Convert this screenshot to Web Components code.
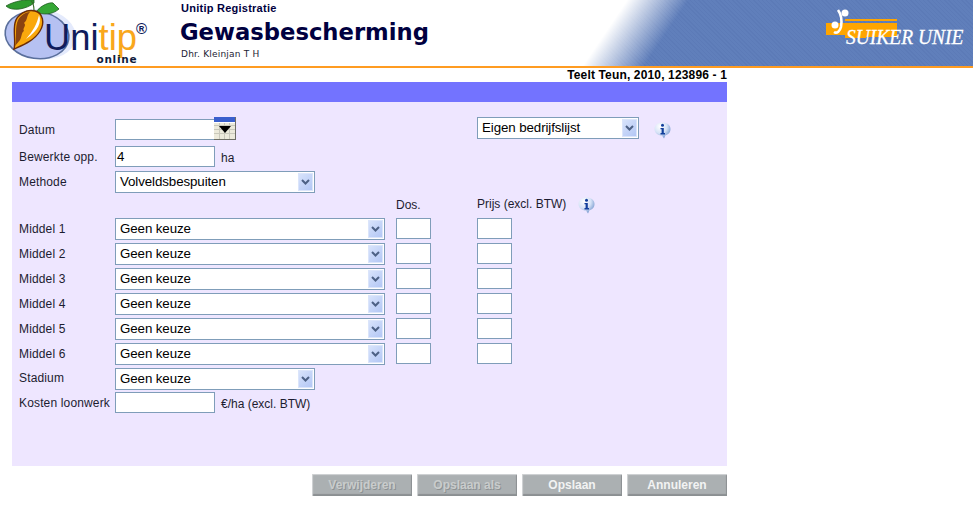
<!DOCTYPE html>
<html>
<head>
<meta charset="utf-8">
<title>Gewasbescherming</title>
<style>
  html, body { margin: 0; background: #fff; }
  body { font-family: "Liberation Sans", Arial, sans-serif; }
</style>
</head>
<body>
<tip-header></tip-header>
<tip-crumb>Teelt Teun, 2010, 123896 - 1</tip-crumb>
<tip-form></tip-form>
<tip-actions></tip-actions>

<script>
class TipHeader extends HTMLElement {
  constructor() {
    super();
    this.attachShadow({ mode: 'open' });
  }

  connectedCallback() {
    this.shadowRoot.innerHTML = `
      <style>
        :host {
          display: flex;
          height: 66px;
          border-bottom: 2px solid #ff9c21;
          color: #000040;
          background:
            linear-gradient(124deg, #fff 520px, rgba(255,255,255,0) 571px),
            repeating-linear-gradient(45deg, rgba(20,40,110,.05) 0 1px, transparent 1px 3px),
            #607fbb;
        }
        .logo { width: 181px; flex: none; }
        .logo svg { display: block; }
        .titles { flex: 1; display: flex; flex-direction: column; }
        .sub { font: bold 11px/12px "Liberation Sans", sans-serif; margin-top: 2px; letter-spacing: .25px; }
        h1 { margin: 5px 0 0 -1px; font: bold 22.7px/27px "DejaVu Sans", sans-serif; }
        .user { font: 9px/11px "DejaVu Sans", sans-serif; margin-top: 3px; color: #223; letter-spacing: .2px; }
        .partner { flex: none; width: 148px; }
      </style>
      <div class="logo">
        <svg width="160" height="66" viewBox="0 0 160 66">
          <ellipse cx="41" cy="34" rx="35" ry="25" transform="rotate(8 41 34)" fill="#e4eafc"/>
          <ellipse cx="37" cy="35" rx="32" ry="23.5" transform="rotate(8 37 35)" fill="#b6c1f2" stroke="#5a6f9c" stroke-width="1.600"/>
          <path d="M34 0 C27 -1 14 1 6 6 C12 12 27 9 34 3 Z" fill="#2e9b2e" stroke="#1f5a1f" stroke-width=".8"/>
          <path d="M36 12 C41 5 50 2 53 3 L59 9 C52 15 43 15 36 12 Z" fill="#35a735" stroke="#1f5a1f" stroke-width=".8"/>
          <path d="M31 1 C34 3 34 7 34 11" fill="none" stroke="#3a6a2a" stroke-width="1.200"/>
          <path d="M14 49 C16 42 13 32 15 23 C17 14 27 9 35 11 C43 13 45 23 40 31 C34 41 23 45 14 49 Z" fill="#f9a80d" stroke="#6b2c05" stroke-width="1.400"/>
          <path d="M15 46 C17 38 15 30 17 23 C19 16 25 12 30 12 C26 16 28 20 24 23 C27 26 22 28 24 31 C21 33 22 37 20 40 Z" fill="#8a4310"/>
          <path d="M39 15 C42 22 38 31 26 39 C33 31 37 24 39 15 Z" fill="#fff"/>
          <text x="44" y="50" font-family="Liberation Sans" font-size="36.500" textLength="93" lengthAdjust="spacingAndGlyphs"><tspan fill="#101c5c">Uni</tspan><tspan fill="#f9a71c">tip</tspan></text>
          <text x="136" y="34" font-family="Liberation Sans" font-weight="bold" font-size="15" fill="#101c5c">®</text>
          <text x="96.500" y="63" font-family="DejaVu Sans" font-weight="bold" font-size="10.500" fill="#101c3c" textLength="40">online</text>
        </svg>
      </div>
      <div class="titles">
        <div class="sub">Unitip Registratie</div>
        <h1>Gewasbescherming</h1>
        <div class="user">Dhr. Kleinjan T H</div>
      </div>
      <div class="partner">
        <svg width="148" height="66" viewBox="825 0 148 66">
          <path d="M845 19 H897 V21 H845 Z M826 23 H897 V37 H866 V38 H845 V35 H826 Z" fill="#ffa500"/>
          <path d="M838 10 C841 14 842 21 841 27 C840 31 837 34 834 32" fill="none" stroke="#fff" stroke-width="2.600"/>
          <circle cx="845" cy="13" r="3.500" fill="#fff"/>
          <circle cx="835" cy="25" r="3.500" fill="#fff"/>
          <text transform="translate(846 43.500) scale(1 1.100)" font-family="Liberation Serif" font-style="italic" font-size="19.500" fill="#fff" stroke="#fff" stroke-width=".25">SUIKER UNIE</text>
        </svg>
      </div>
    `;
  }
}

class TipCrumb extends HTMLElement {
  constructor() {
    super();
    this.attachShadow({ mode: 'open' });
    this.shadowRoot.innerHTML = `
      <style>
        :host {
          display: block;
          width: 727px;
          height: 14px;
          text-align: right;
          font: bold 12px/15px "Liberation Sans", sans-serif;
          letter-spacing: .15px;
          color: #000;
        }
      </style>
      <slot></slot>
    `;
  }
}

class TipField extends HTMLElement {
  constructor() {
    super();
    this.attachShadow({ mode: 'open' });
    this.shadowRoot.innerHTML = `
      <style>
        :host {
          display: block;
          box-sizing: border-box;
          width: var(--w, 100px);
          height: 21px;
          padding: 0 1px;
          background: #fff;
          border: 1px solid #7f9db9;
          font: 13.33px/19px "Liberation Sans", sans-serif;
          color: #000;
        }
      </style>
      <slot></slot>
    `;
  }
}

class TipSelect extends HTMLElement {
  constructor() {
    super();
    this.attachShadow({ mode: 'open' });
    this.shadowRoot.innerHTML = `
      <style>
        :host {
          display: flex;
          box-sizing: border-box;
          width: var(--w, 200px);
          height: 22px;
          padding: 1px;
          background: #fff;
          border: 1px solid #7f9db9;
          font: 13.33px/18px "Liberation Sans", sans-serif;
          letter-spacing: -.1px;
          color: #000;
        }
        .value { flex: 1; padding-left: 3px; white-space: nowrap; }
        .arrow {
          flex: none;
          width: 15px;
          display: flex;
          align-items: center;
          justify-content: center;
          background: linear-gradient(135deg, #d8e3fb, #b3c7f5);
          border: 1px solid #dbe5fb;
          box-sizing: border-box;
        }
      </style>
      <span class="value"><slot></slot></span>
      <span class="arrow">
        <svg width="9" height="7" viewBox="0 0 9 7"><path d="M1 1 L4.500 4.500 L8 1" fill="none" stroke="#4d6185" stroke-width="2"/></svg>
      </span>
    `;
  }
}

class TipInfo extends HTMLElement {
  constructor() {
    super();
    this.attachShadow({ mode: 'open' });
    this.shadowRoot.innerHTML = `
      <style>
        :host { display: block; width: 17px; height: 17px; flex: none; }
        svg { display: block; }
      </style>
      <svg width="17" height="17" viewBox="0 0 17 17">
        <defs>
          <radialGradient id="b" cx=".35" cy=".25" r=".85">
            <stop offset="0" stop-color="#fff"/>
            <stop offset=".5" stop-color="#d5e2f6"/>
            <stop offset="1" stop-color="#5f86c4"/>
          </radialGradient>
        </defs>
        <path d="M8.500 .5 C13 .5 16.500 3 16.500 7 C16.500 10.500 14 12.800 11.500 13.200 L10 16.500 L8 13.500 C4 13.500 .5 11 .5 7 C.5 3 4 .5 8.500 .5 Z" fill="url(#b)"/>
        <circle cx="8.500" cy="3.300" r="1.500" fill="#123f9c"/>
        <path d="M6.500 6 H9.800 V11 H11 V12.500 H6.500 V11 H7.600 V7.300 H6.500 Z" fill="#123f9c"/>
      </svg>
    `;
  }
}

class TipCalendar extends HTMLElement {
  constructor() {
    super();
    this.attachShadow({ mode: 'open' });
    this.shadowRoot.innerHTML = `
      <style>
        :host { display: block; width: 22px; height: 23px; flex: none; margin: -2px 0 0 -1px; }
        svg { display: block; }
      </style>
      <svg width="22" height="23" viewBox="0 0 22 23" shape-rendering="crispEdges">
        <rect width="22" height="23" fill="#eceadb"/>
        <path d="M0 8.500H21M0 12.500H21M0 16.500H21M5.500 6V23M10.500 6V23M15.500 6V23" stroke="#c9c8bb"/>
        <rect width="21" height="5" fill="#3a5fcd"/>
        <rect y="5" width="21" height="1" fill="#fff"/>
        <rect x="21" width="1" height="23" fill="#6e6e66"/>
        <rect y="22" width="22" height="1" fill="#6e6e66"/>
        <path d="M5 9 H17 L11 16 Z" fill="#000" shape-rendering="auto"/>
      </svg>
    `;
  }
}

class TipForm extends HTMLElement {
  constructor() {
    super();
    this.attachShadow({ mode: 'open' });
  }

  connectedCallback() {
    const rows = [1, 2, 3, 4, 5, 6].map(n => `
      <span class="lbl" style="grid-row:${n + 4}">Middel ${n}</span>
      <tip-select style="grid-row:${n + 4};--w:270px">Geen keuze</tip-select>
      <tip-field class="c4" style="grid-row:${n + 4};--w:35px"></tip-field>
      <tip-field class="c6" style="grid-row:${n + 4};--w:35px"></tip-field>
    `).join('');

    this.shadowRoot.innerHTML = `
      <style>
        :host {
          display: block;
          width: 715px;
          margin-left: 12px;
          font: 12px/21px "Liberation Sans", sans-serif;
          color: #1c1c30;
        }
        .bar { height: 20px; background: #7373ff; }
        .grid {
          display: grid;
          box-sizing: border-box;
          height: 364px;
          padding: 16px 0 0 7px;
          background: #eee6ff;
          grid-template-columns: 96px 270px 11px 35px 46px 35px 1fr;
          grid-template-rows: 28px 25px 25px 22px repeat(6, 25px) 24px 24px;
          align-items: start;
        }
        .lbl { grid-column: 1; white-space: nowrap; margin-top: 1px; letter-spacing: .15px; }
        .pair { grid-column: 2; display: flex; gap: 6px; }
        .pair.tight { gap: 0; margin-top: 1px; }
        .unit { line-height: 25px; }
        tip-select { grid-column: 2; }
        .c4 { grid-column: 4; }
        .c6 { grid-column: 6; }
        .side { grid-column: 6 / span 2; display: flex; gap: 15px; align-items: center; margin-top: -1px; }
        .side tip-info { margin-top: 4px; }
        .head { line-height: 14px; white-space: nowrap; }
        .prijs { grid-column: 6 / span 2; display: flex; gap: 12px; align-items: flex-start; margin-top: 1px; }
        .dos { grid-column: 4; margin-top: 2px; }
      </style>
      <div class="bar"></div>
      <div class="grid">
        <span class="lbl" style="grid-row:1;margin-top:2px">Datum</span>
        <div class="pair tight" style="grid-row:1"><tip-field></tip-field><tip-calendar></tip-calendar></div>
        <div class="side" style="grid-row:1">
          <tip-select style="--w:162px">Eigen bedrijfslijst</tip-select>
          <tip-info></tip-info>
        </div>

        <span class="lbl" style="grid-row:2">Bewerkte opp.</span>
        <div class="pair" style="grid-row:2"><tip-field>4</tip-field><span class="unit">ha</span></div>

        <span class="lbl" style="grid-row:3">Methode</span>
        <tip-select style="grid-row:3;--w:200px">Volveldsbespuiten</tip-select>

        <span class="head dos" style="grid-row:4">Dos.</span>
        <div class="prijs" style="grid-row:4"><span class="head">Prijs (excl. BTW)</span><tip-info></tip-info></div>

        ${rows}

        <span class="lbl" style="grid-row:11;margin-top:0">Stadium</span>
        <tip-select style="grid-row:11;--w:200px">Geen keuze</tip-select>

        <span class="lbl" style="grid-row:12">Kosten loonwerk</span>
        <div class="pair" style="grid-row:12"><tip-field></tip-field><span class="unit">€/ha (excl. BTW)</span></div>
      </div>
    `;
  }
}

class TipButton extends HTMLElement {
  constructor() {
    super();
    this.attachShadow({ mode: 'open' });
    this.shadowRoot.innerHTML = `
      <style>
        :host {
          display: block;
          box-sizing: border-box;
          width: 100px;
          height: 22px;
          background: #abb0b2;
          box-shadow: inset 1px 1px 1px #d2d5d6, inset -1px -2px 1px #8b9092;
          text-align: center;
          font: bold 12px/22px "Liberation Sans", sans-serif;
          color: #f2f3f3;
        }
        :host([disabled]) {
          color: #c9cccc;
          text-shadow: 1px 1px 0 #8d9294;
        }
      </style>
      <slot></slot>
    `;
  }
}

class TipActions extends HTMLElement {
  constructor() {
    super();
    this.attachShadow({ mode: 'open' });
    this.shadowRoot.innerHTML = `
      <style>
        :host {
          display: flex;
          justify-content: flex-end;
          gap: 5px;
          width: 727px;
          margin-top: 8px;
        }
      </style>
      <tip-button disabled>Verwijderen</tip-button>
      <tip-button disabled>Opslaan als</tip-button>
      <tip-button>Opslaan</tip-button>
      <tip-button>Annuleren</tip-button>
    `;
  }
}

customElements.define('tip-header', TipHeader);
customElements.define('tip-crumb', TipCrumb);
customElements.define('tip-field', TipField);
customElements.define('tip-select', TipSelect);
customElements.define('tip-info', TipInfo);
customElements.define('tip-calendar', TipCalendar);
customElements.define('tip-form', TipForm);
customElements.define('tip-button', TipButton);
customElements.define('tip-actions', TipActions);
</script>
</body>
</html>
